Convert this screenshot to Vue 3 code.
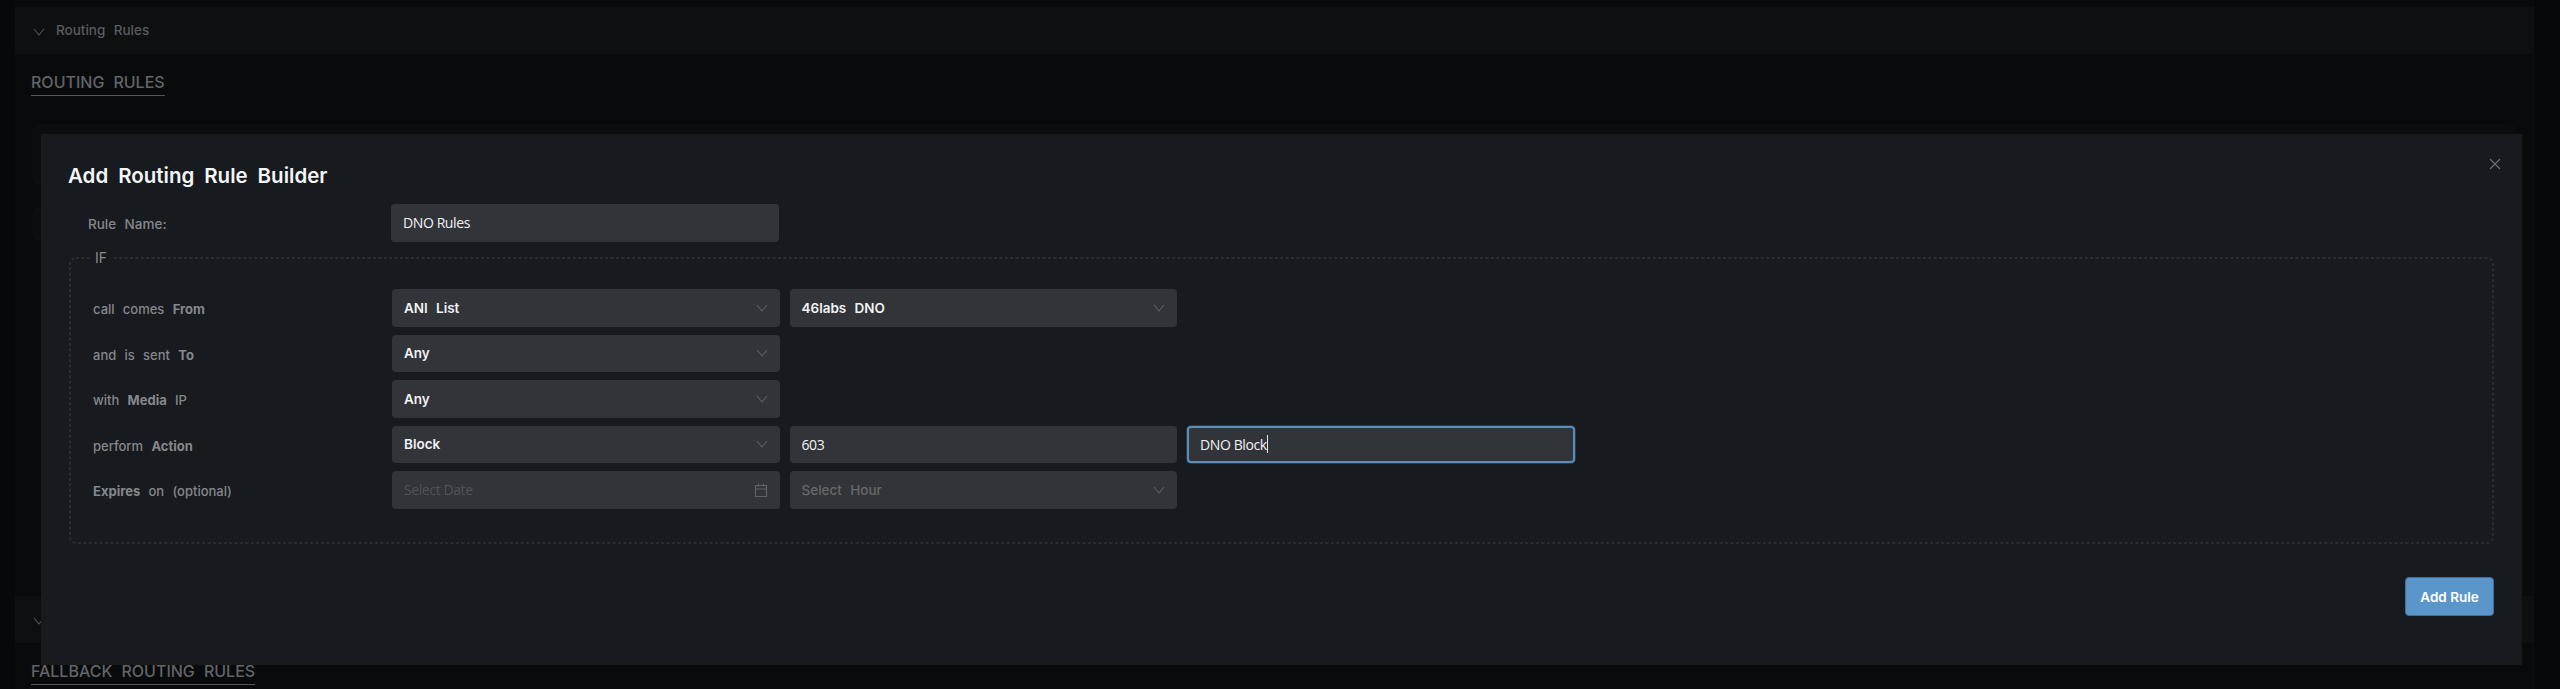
<template>
  <div class="page">
    <!-- contenido detras del modal -->
    <div class="content">
      <div class="panel">
        <svg viewBox="0 0 12 8" width="12" height="8"><path d="M1 1l5 6 5-6" fill="none" stroke="#55575a" stroke-width="1.1" /></svg>
        <span class="panel-title">Routing Rules</span>
      </div>
      <div class="section-head"><h3>ROUTING RULES</h3></div>
      <div class="ghost-card first"></div>
      <div class="ghost-card second"></div>
      <div class="panel lower">
        <svg viewBox="0 0 12 8" width="12" height="8"><path d="M1 1l5 6 5-6" fill="none" stroke="#55575a" stroke-width="1.1" /></svg>
        <span class="panel-title">Fallback Routing Rules</span>
      </div>
      <div class="section-head low"><h3>FALLBACK ROUTING RULES</h3></div>
    </div>

    <div class="modal">
      <svg class="close" viewBox="0 0 12 12" width="12" height="12"><path d="M1 1l10 10M11 1L1 11" fill="none" stroke="#6b6d70" stroke-width="1.2" /></svg>
      <h2>Add Routing Rule Builder</h2>

      <div class="name-row">
        <label>Rule Name:</label>
        <input class="field plain" value="DNO Rules" readonly />
      </div>

      <div class="if-box">
        <svg class="dots"><rect width="100%" height="100%" rx="6" fill="none" stroke="#292c30" stroke-width="2" stroke-dasharray="3 2.4" /></svg>
        <div class="legend">IF</div>
        <div v-for="row in rows" :key="row.id" class="row">
          <div class="row-label">
            <template v-for="part in row.label" :key="part.t"><span :class="{ strong: part.b }">{{ part.t }}</span>{{ ' ' }}</template>
          </div>
          <div class="cells">
            <template v-for="cell in row.cells" :key="cell.text">
              <div v-if="cell.kind === 'select'" class="field select" :class="{ muted: cell.muted }">
                <span>{{ cell.text }}</span>
                <svg class="arrow" viewBox="0 0 12 8" width="12" height="8"><path d="M1 1l5 6 5-6" fill="none" stroke="#5f6267" stroke-width="1.1" /></svg>
              </div>
              <div v-else-if="cell.kind === 'date'" class="field plain placeholder">
                <span>{{ cell.text }}</span>
                <svg class="cal" viewBox="0 0 14 16" width="14" height="16"><path d="M1.5 3.5h11v11h-11zM1.5 7h11M4.5 1.5v3M9.5 1.5v3" fill="none" stroke="#5f6267" stroke-width="1.2" /></svg>
              </div>
              <div v-else-if="cell.kind === 'focus'" class="field plain focus">{{ cell.text }}<i class="caret"></i></div>
              <input v-else class="field plain" :value="cell.text" readonly />
            </template>
          </div>
        </div>
      </div>

      <div class="actions">
        <button class="add">Add Rule</button>
      </div>
    </div>
  </div>
</template>

<script setup>
const rows = [
  {
    id: 'from',
    label: [{ t: 'call comes' }, { t: 'From', b: true }],
    cells: [
      { kind: 'select', text: 'ANI List' },
      { kind: 'select', text: '46labs DNO' }
    ]
  },
  {
    id: 'to',
    label: [{ t: 'and is sent' }, { t: 'To', b: true }],
    cells: [{ kind: 'select', text: 'Any' }]
  },
  {
    id: 'media',
    label: [{ t: 'with' }, { t: 'Media', b: true }, { t: 'IP' }],
    cells: [{ kind: 'select', text: 'Any' }]
  },
  {
    id: 'action',
    label: [{ t: 'perform' }, { t: 'Action', b: true }],
    cells: [
      { kind: 'select', text: 'Block' },
      { kind: 'input', text: '603' },
      { kind: 'focus', text: 'DNO Block' }
    ]
  },
  {
    id: 'expires',
    label: [{ t: 'Expires', b: true }, { t: 'on (optional)' }],
    cells: [
      { kind: 'date', text: 'Select Date' },
      { kind: 'select', text: 'Select Hour', muted: true }
    ]
  }
]
</script>

<style>
html,
body {
  margin: 0;
  background: #070809;
}
</style>

<style scoped>
.page {
  position: relative;
  box-sizing: border-box;
  height: 689px;
  overflow: hidden;
  padding: 0 26px 0 15px;
  background: #070809;
  font-family: Inter, "Liberation Sans", sans-serif;
  word-spacing: 0.3em;
}

.content {
  height: 100%;
  padding-top: 7px;
  box-sizing: border-box;
  background: #090a0c;
  border-right: 1px solid #0d0e10;
}

.panel {
  display: flex;
  align-items: center;
  gap: 11px;
  height: 47px;
  padding-left: 18px;
  background: #0d0f11;
}

.panel svg {
  margin-top: 3px;
}

.panel-title {
  padding-bottom: 2px;
  font-size: 13.5px;
  font-weight: 500;
  color: #5a5c5f;
}

.section-head {
  padding: 17px 16px 0;
  height: 24px;
}

.section-head h3 {
  display: inline-block;
  margin: 0;
  padding-bottom: 2px;
  font-size: 16px;
  line-height: 22px;
  font-weight: 500;
  color: #626467;
  border-bottom: 1px solid #55575a;
}

.ghost-card {
  height: 62px;
  margin: 29px 16px 0 17px;
  border-radius: 8px;
  background: #0b0d0f;
}

.ghost-card.second {
  height: 36px;
  margin-top: 20px;
}

.panel.lower {
  margin-top: 354px;
}

.section-head.low {
  padding-top: 17px;
}

.modal {
  position: absolute;
  left: 41px;
  top: 134px;
  box-sizing: border-box;
  width: 2481px;
  height: 531px;
  padding: 24px 23px 0 24px;
  background: #171a1e;
  border: 4px solid #191a1c;
  border-width: 4px 5px 4px 4px;
}

.close {
  position: absolute;
  top: 20px;
  right: 16px;
}

h2 {
  margin: 0 0 0 -1px;
  font-size: 20.5px;
  line-height: 28px;
  font-weight: 600;
  color: #f4f5f6;
}

.name-row {
  display: flex;
  align-items: center;
  margin-top: 14px;
  padding-left: 19px;
}

.name-row label {
  width: 303px;
  padding-top: 3px;
  font-size: 13.5px;
  font-weight: 500;
  color: #85888c;
}

.field {
  box-sizing: border-box;
  width: 387.5px;
  height: 37.5px;
  padding: 0 12px;
  border: 0;
  outline: 0;
  border-radius: 4px;
  background: #313439;
  font-size: 14px;
  color: #f1f2f3;
  display: flex;
  align-items: center;
  flex: none;
}

.plain {
  font-family: "Open Sans", "Noto Sans", sans-serif;
  font-size: 14px;
  word-spacing: normal;
  letter-spacing: -0.4px;
}

.select {
  justify-content: space-between;
  font-weight: 600;
  font-size: 13.5px;
}

.select.muted {
  color: #66696d;
  font-weight: 500;
}

.placeholder {
  justify-content: space-between;
  color: #505357;
}

.focus {
  border: 2px solid #5b8db8;
  padding-left: 11px;
  box-shadow: 0 0 0 1px #2a3a48;
}

.caret {
  display: inline-block;
  width: 1px;
  height: 18px;
  background: #e8e8e8;
}

.if-box {
  position: relative;
  box-sizing: border-box;
  height: 287px;
  margin-top: 15.5px;
  padding: 32px 0 0 24px;
}

.dots {
  position: absolute;
  inset: 1px;
  width: calc(100% - 2px);
  height: calc(100% - 2px);
  overflow: visible;
}

.legend {
  position: absolute;
  top: -7px;
  left: 22px;
  padding: 0 4px;
  background: #171a1e;
  font-size: 14px;
  line-height: 16px;
  color: #85888c;
}

.row {
  position: relative;
  display: flex;
  align-items: center;
  height: 37.5px;
  margin-bottom: 8px;
}

.row-label {
  width: 299px;
  padding-top: 3px;
  font-size: 13px;
  font-weight: 500;
  color: #85888c;
}

.strong {
  font-weight: 700;
}

.cells {
  display: flex;
  gap: 10px;
}

.actions {
  display: flex;
  justify-content: flex-end;
  margin-top: 33px;
}

.add {
  box-sizing: border-box;
  width: 89px;
  height: 39px;
  border: 1px solid #3e6f9e;
  border-radius: 4px;
  background: #5b96cb;
  font-family: Inter, "Liberation Sans", sans-serif;
  font-size: 13.5px;
  font-weight: 600;
  color: #fff;
}
</style>
